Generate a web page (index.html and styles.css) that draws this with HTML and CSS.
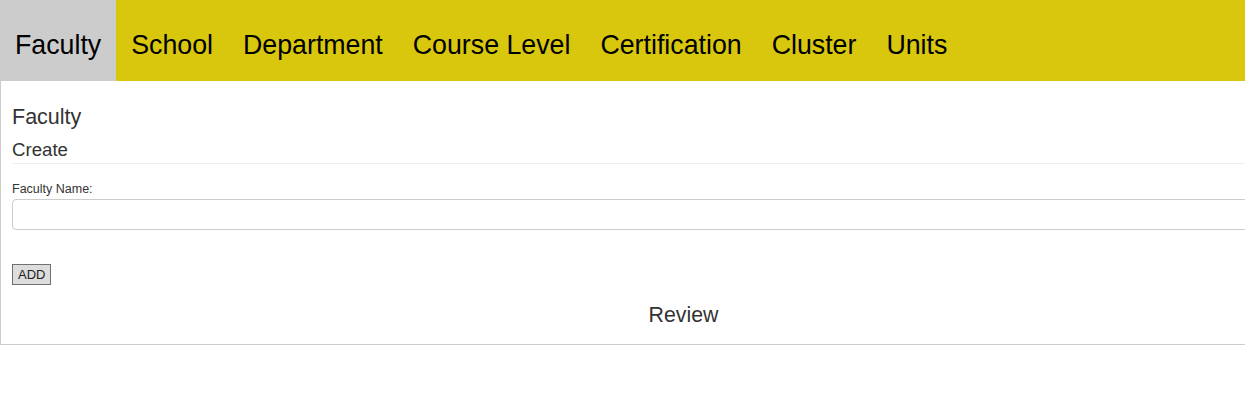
FILE: index.html
```html
<!DOCTYPE html>
<html>
<head>
<meta charset="utf-8">
<link rel="stylesheet" href="styles.css">
</head>
<body>
<div class="page">
  <nav class="nav">
    <a class="nav-item active">Faculty</a>
    <a class="nav-item">School</a>
    <a class="nav-item">Department</a>
    <a class="nav-item">Course Level</a>
    <a class="nav-item">Certification</a>
    <a class="nav-item">Cluster</a>
    <a class="nav-item">Units</a>
  </nav>
  <section class="panel">
    <div class="title">Faculty</div>
    <div class="subtitle">Create</div>
    <label class="label">Faculty Name:</label>
    <div class="input"></div>
    <button class="btn">ADD</button>
    <div class="review">Review</div>
  </section>
</div>
</body>
</html>
```
FILE: styles.css
```css
html, body {
  margin: 0;
  padding: 0;
  overflow: hidden;
  background: #fff;
  font-family: "Liberation Sans", Arial, sans-serif;
}
.page {
  width: 1366px;
}
.nav {
  display: flex;
  background: #d9c70d;
  height: 81px;
}
.nav-item {
  font-size: 26.75px;
  line-height: 30px;
  padding: 30px 15px 21px;
  color: #000;
}
.nav-item.active {
  background: #cccccc;
}
.panel {
  display: flex;
  flex-direction: column;
  border-left: 1px solid #cccccc;
  border-bottom: 1px solid #cccccc;
  padding: 24px 0 17px 11px;
  color: #333;
}
.title {
  font-size: 21.5px;
  line-height: 24px;
}
.subtitle {
  font-size: 18.67px;
  line-height: 22px;
  margin-top: 10px;
  padding-bottom: 2px;
  border-bottom: 1px solid #eeeeee;
}
.label {
  font-size: 12.5px;
  line-height: 14px;
  margin-top: 18px;
}
.input {
  margin-top: 3px;
  height: 29px;
  border: 1px solid #cccccc;
  border-radius: 4px;
}
.btn {
  align-self: flex-start;
  margin-top: 34px;
  height: 21px;
  padding: 0 5px;
  font-family: "Liberation Sans", Arial, sans-serif;
  font-size: 13px;
  line-height: 15px;
  color: #222;
  background: #dddddd;
  border: 1px solid #707070;
  border-radius: 0;
}
.review {
  margin-top: 18px;
  font-size: 21.33px;
  line-height: 24px;
  text-align: center;
  padding-right: 11px;
}
```
